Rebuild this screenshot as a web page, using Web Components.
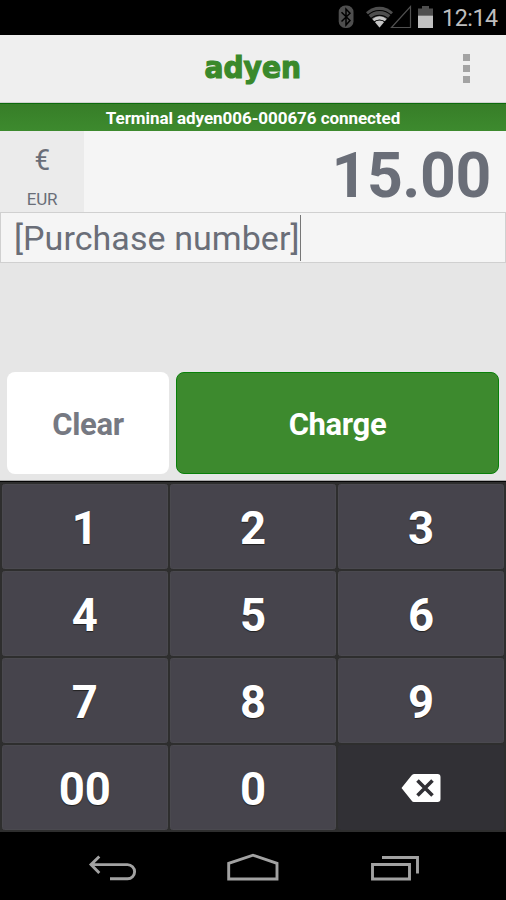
<!DOCTYPE html>
<html lang="en">
<head>
<meta charset="utf-8">
<title>Terminal</title>
<style>
html,body{margin:0;padding:0;background:#000}
body{width:506px;height:900px;overflow:hidden;font-family:Roboto,"Liberation Sans",sans-serif}
</style>
</head>
<body>
<pay-app></pay-app>
<script>
function define(name, html) {
  customElements.define(name, class extends HTMLElement {
    constructor() {
      super();
      const t = document.createElement('template');
      t.innerHTML = html;
      this.attachShadow({ mode: 'open' }).appendChild(t.content.cloneNode(true));
    }
  });
}

define('status-bar', `
<style>
:host{display:flex;height:35px;background:#000;align-items:center;justify-content:flex-end;box-sizing:border-box;padding-right:9px}
svg{display:block;width:104px;height:35px}
span{font-size:23.3px;line-height:35px;color:#bebebe;width:55px;white-space:nowrap;margin-left:2px;padding-top:2px;letter-spacing:-.45px}
</style>
<svg viewBox="336 0 104 35">
  <rect x="338.7" y="5.5" width="14.8" height="22.5" rx="6.5" fill="#4e4e4e"/>
  <path d="M341.500 12.200 350 20.500 346 25V9L350 13.200 341.500 21.500" fill="none" stroke="#000" stroke-width="1.500"/>
  <path d="M366 12.200a19.500 19.500 0 0 1 27 0L379.500 27.500Z" fill="#4e4e4e"/>
  <path d="M372.500 19a10.500 10.500 0 0 1 14 0l-7 8.500Z" fill="#c6c6c6"/>
  <path d="M367.500 15.400a17 17 0 0 1 24 0M370.500 18.900a12.800 12.800 0 0 1 18 0M373.500 22.500a8.500 8.500 0 0 1 12 0" fill="none" stroke="#000" stroke-width="1.100"/>
  <path d="M391.500 27.500H410.500V6.500Z" fill="none" stroke="#505050" stroke-width="1.200"/>
  <path d="M418 15.500V8.500h4V6h7v2.500h4v7Z" fill="#4e4e4e"/>
  <rect x="418" y="15.500" width="15" height="12.500" fill="#c0c0c0"/>
</svg><span>12:14</span>`);

define('brand-logo', `
<style>:host{display:block;width:110px;height:50px}svg{display:block}</style>
<svg width="110" height="50" viewBox="198 44 110 50">
  <text x="204.500" y="78" font-family="DejaVu Sans" font-weight="700" font-size="29.500" textLength="96.500" lengthAdjust="spacingAndGlyphs" fill="#3a892b" stroke="#3a892b" stroke-width="1.200">adyen</text>
</svg>`);

define('app-header', `
<style>
:host{display:grid;grid-template-columns:1fr 110px 1fr;height:67.500px;background:#efefef;box-sizing:border-box;border-bottom:1px solid #cfd1cf;align-items:center}
brand-logo{grid-column:2;padding-top:2px}
.menu{justify-self:end;display:grid;gap:4px;margin-right:36px;padding-top:1px}
i{display:block;width:7px;height:7px;background:#a3a3a3}
</style>
<brand-logo></brand-logo><div class="menu"><i></i><i></i><i></i></div>`);

define('connection-banner', `
<style>
:host{display:block;height:28.500px;box-sizing:border-box;border-top:1px solid #0c6a0c;background:linear-gradient(#377e28,#3d8a2e);color:#fff;font-weight:700;font-size:17px;letter-spacing:-.06px;line-height:28px;text-align:center;white-space:nowrap}
</style><slot></slot>`);

define('amount-row', `
<style>
:host{display:flex;height:81px;background:#f5f5f5;color:#6a6e78}
.cur{width:84px;background:#ebebeb;display:flex;flex-direction:column;align-items:center}
.sym{font-size:30px;line-height:34px;margin-top:12px;transform:scaleX(.93)}
.code{font-size:17px;line-height:20px;margin-top:12px;letter-spacing:-.2px}
.val{flex:1;text-align:right;padding-right:15px;font-size:62.500px;letter-spacing:-.4px;font-weight:700;line-height:89px}
</style>
<div class="cur"><span class="sym">€</span><span class="code">EUR</span></div><div class="val"><slot></slot></div>`);

define('purchase-field', `
<style>
:host{display:flex;align-items:center;height:51px;box-sizing:border-box;border:1.500px solid #d0d0d0;background:#f5f5f5;color:#6a6e78;padding-left:13px;font-size:34px;letter-spacing:.07px;white-space:nowrap}
.caret{width:1px;height:46px;background:#777}
.t{line-height:50px}
</style>
<span class="t"><slot></slot></span><span class="caret"></span>`);

define('action-button', `
<style>
:host{display:flex;align-items:center;justify-content:center;box-sizing:border-box;height:102px;border-radius:8px;background:#fff;color:#767982;font-weight:700;font-size:31px;letter-spacing:-.35px;padding-top:3px}
:host([primary]){background:#3d8a2e;color:#fff;border:1px solid #098009}
</style><slot></slot>`);

define('key-button', `
<style>
:host{display:flex;align-items:center;justify-content:center;box-sizing:border-box;border-radius:2.500px;background:#46444c;border:1px solid #4a494f;color:#fff;font-weight:700;font-size:45.500px;padding-top:4px;text-shadow:0 1px 1px #222}
:host([dark]){background:#313035;border-color:#313035;padding:1px 0 0}
</style><slot></slot>`);

define('key-pad', `
<style>
:host{display:grid;height:351px;box-sizing:border-box;background:#2e2e2e;border-top:1px solid #050505;padding:2px 2px 2px;grid-template-columns:repeat(3,1fr);grid-template-rows:repeat(4,1fr);gap:2.500px;box-shadow:0 -1px #aaa}
svg{display:block}
</style>
<key-button>1</key-button><key-button>2</key-button><key-button>3</key-button>
<key-button>4</key-button><key-button>5</key-button><key-button>6</key-button>
<key-button>7</key-button><key-button>8</key-button><key-button>9</key-button>
<key-button>00</key-button><key-button>0</key-button>
<key-button dark><svg width="40" height="30" viewBox="0 0 40 30"><path d="M.500 15 10.500 2.500Q11.500 1 13 1H36.500Q39.500 1 39.500 4V26Q39.500 29 36.500 29H13Q11.500 29 10.500 27.500Z" fill="#fff"/><path d="M16.500 7.500 31.500 22.500M31.500 7.500 16.500 22.500" stroke="#313035" stroke-width="3.600"/></svg></key-button>`);

define('nav-bar', `
<style>:host{display:block;height:68px;background:#000}svg{display:block}</style>
<svg width="506" height="68" viewBox="0 832 506 68" fill="none" stroke="#a2a2a2" stroke-width="2.900">
  <path d="M91 864.600H127.500a7 7 0 0 1 0 14.200H110M99.300 856.500 91 864.600 99.300 873"/>
  <path d="M228.700 879V863.300L253 855.200 277 863.300V879Z"/>
  <path d="M372.500 864.500H409.500V879H372.500ZM382 857.500H417.500V873.500"/>
</svg>`);

define('pay-app', `
<style>
:host{display:flex;flex-direction:column;width:506px;height:900px;background:#e6e6e6}
.body{flex:1;display:grid;grid-template-columns:162px 323px;column-gap:7px;align-items:end;padding:0 7px 7px;box-sizing:border-box}
</style>
<status-bar></status-bar>
<app-header></app-header>
<connection-banner>Terminal adyen006-000676 connected</connection-banner>
<amount-row>15.00</amount-row>
<purchase-field>[Purchase number]</purchase-field>
<div class="body"><action-button>Clear</action-button><action-button primary>Charge</action-button></div>
<key-pad></key-pad>
<nav-bar></nav-bar>`);
</script>
</body>
</html>
